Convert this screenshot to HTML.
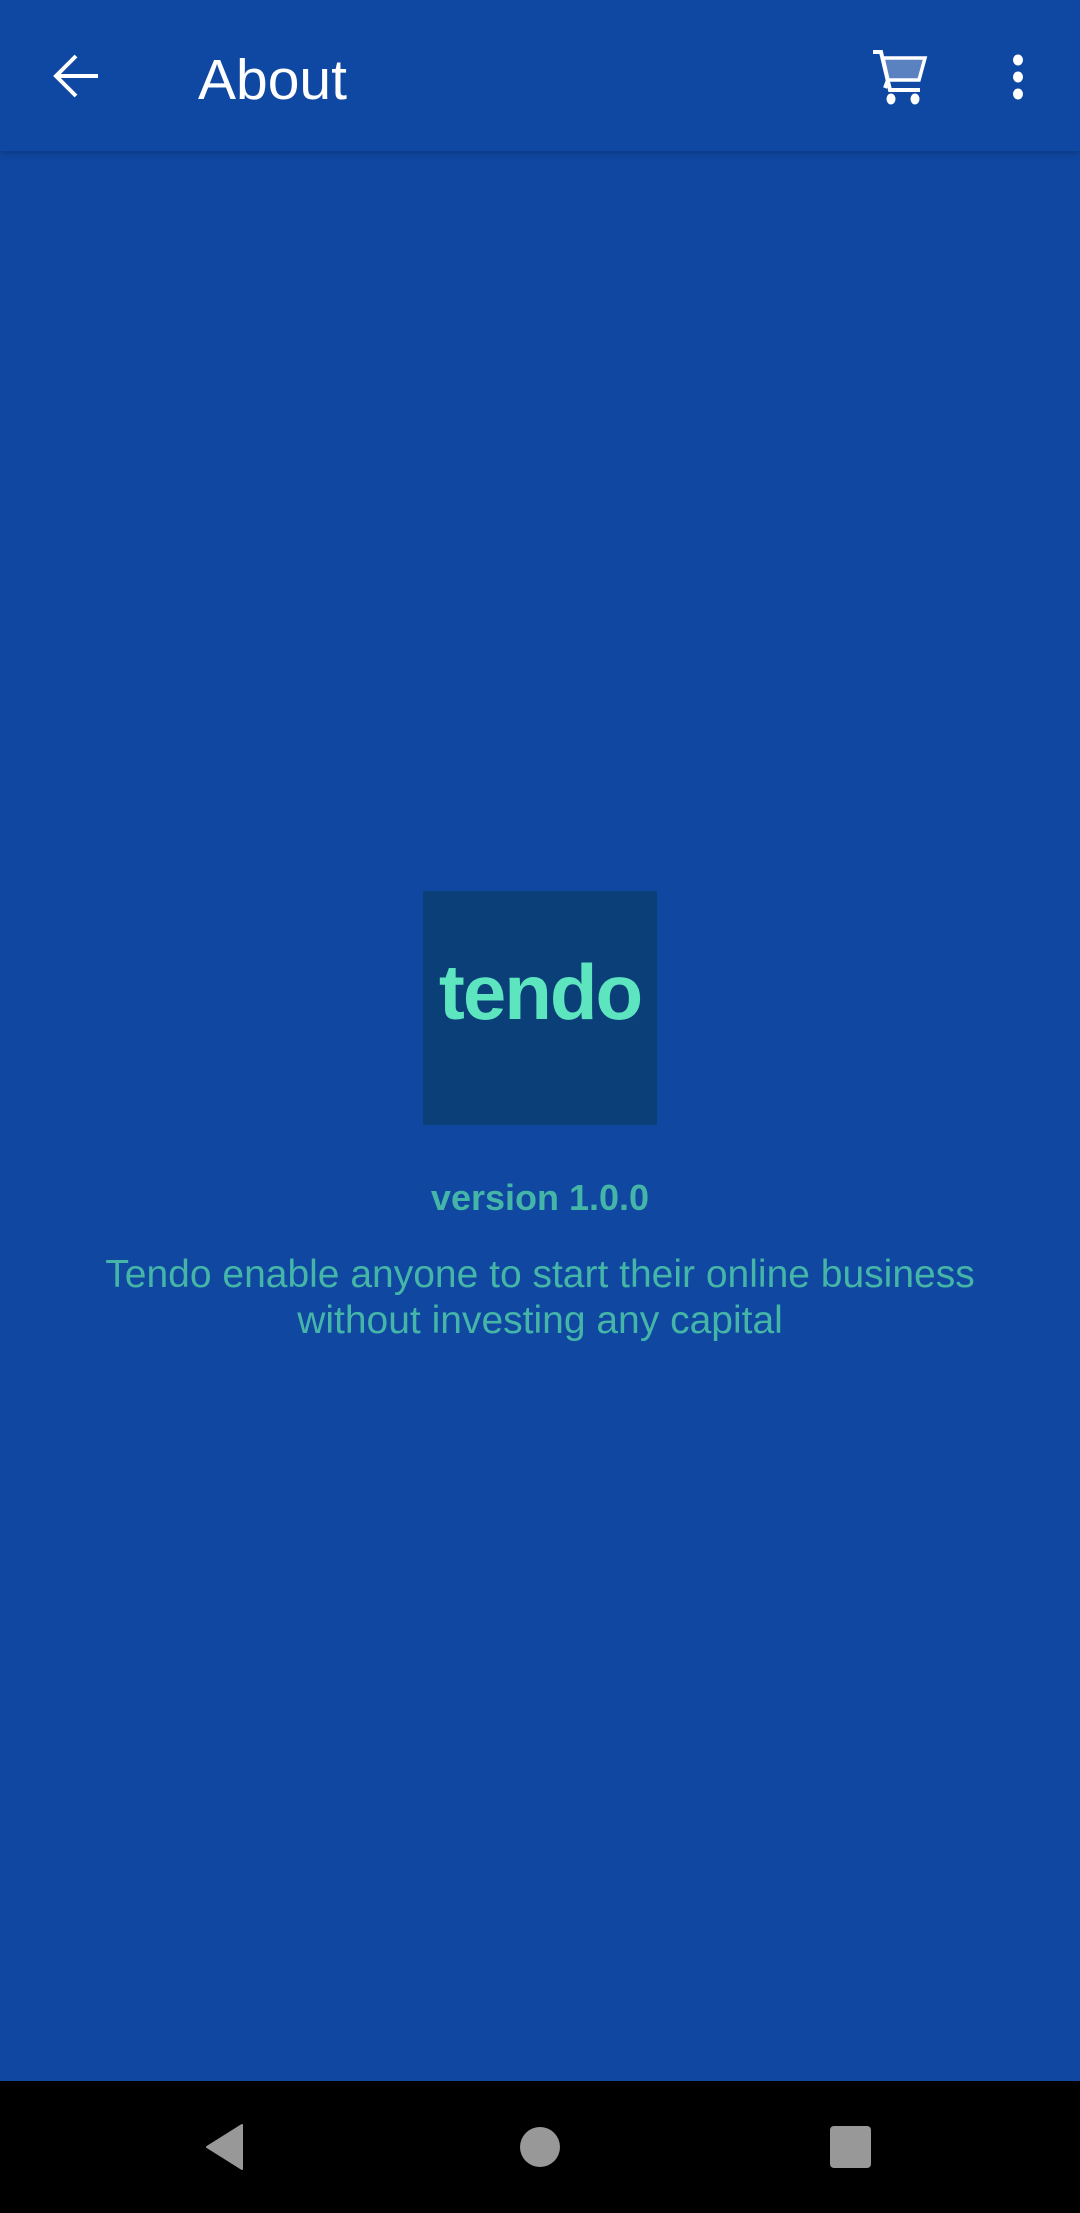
<!DOCTYPE html>
<html><head><meta charset="utf-8"><style>
html,body{margin:0;padding:0}
body{width:1080px;height:2213px;background:#0f47a1;position:relative;overflow:hidden;font-family:"Liberation Sans",sans-serif}
.bar{position:absolute;left:0;top:0;width:1080px;height:151px;background:#0f48a2;box-shadow:0 3px 6px rgba(0,0,0,0.18)}
.title{position:absolute;left:198px;top:48px;font-size:57px;color:#fff;line-height:64px}
.logo{position:absolute;left:423px;top:891px;width:234px;height:234px;background:#0a3f78}
.tendo{position:absolute;left:0;top:952px;width:1080px;text-align:center;color:#5ce5bf;font-weight:bold;font-size:78px;letter-spacing:-2px;line-height:80px}
.ver{position:absolute;left:0;top:1177px;width:1080px;text-align:center;color:#45b5a8;font-weight:bold;font-size:36px;line-height:42px}
.desc{position:absolute;left:0;top:1252px;width:1080px;text-align:center;color:#45b5a8;font-size:39px;line-height:46px}
.nav{position:absolute;left:0;top:2081px;width:1080px;height:132px;background:#000}
</style></head><body>
<div class="bar">
<svg style="position:absolute;left:50px;top:50px" width="52" height="52" viewBox="0 0 52 52"><path d="M48 26H8M26 6L6 26l20 20" stroke="#fff" stroke-width="4" fill="none"/></svg>
<div class="title">About</div>
<svg style="position:absolute;left:872px;top:48px" width="56" height="58" viewBox="0 0 56 58"><path d="M1 4h8l9 38h30" stroke="#fff" stroke-width="4" fill="none"/><path d="M11 10h42l-6 22H16z" fill="#5b82c0" stroke="#fff" stroke-width="3.5"/><path d="M16 32l-3 8" stroke="#fff" stroke-width="4"/><ellipse cx="19" cy="51" rx="4.5" ry="5.5" fill="#fff"/><ellipse cx="43" cy="51" rx="4.5" ry="5.5" fill="#fff"/></svg>
<svg style="position:absolute;left:1010px;top:54px" width="16" height="46" viewBox="0 0 16 46"><ellipse cx="8" cy="6" rx="5" ry="5.5" fill="#fff"/><ellipse cx="8" cy="23" rx="5" ry="5.5" fill="#fff"/><ellipse cx="8" cy="40" rx="5" ry="5.5" fill="#fff"/></svg>
</div>
<div class="logo"></div>
<div class="tendo">tendo</div>
<div class="ver">version 1.0.0</div>
<div class="desc">Tendo enable anyone to start their online business<br>without investing any capital</div>
<div class="nav">
<svg style="position:absolute;left:205px;top:43px" width="40" height="46" viewBox="0 0 40 46"><path d="M37 1v44L2 23z" fill="#989898" stroke="#989898" stroke-width="2" stroke-linejoin="round"/></svg>
<div style="position:absolute;left:520px;top:46px;width:40px;height:40px;border-radius:50%;background:#989898"></div>
<div style="position:absolute;left:830px;top:45px;width:41px;height:42px;border-radius:4px;background:#989898"></div>
</div>
</body></html>
